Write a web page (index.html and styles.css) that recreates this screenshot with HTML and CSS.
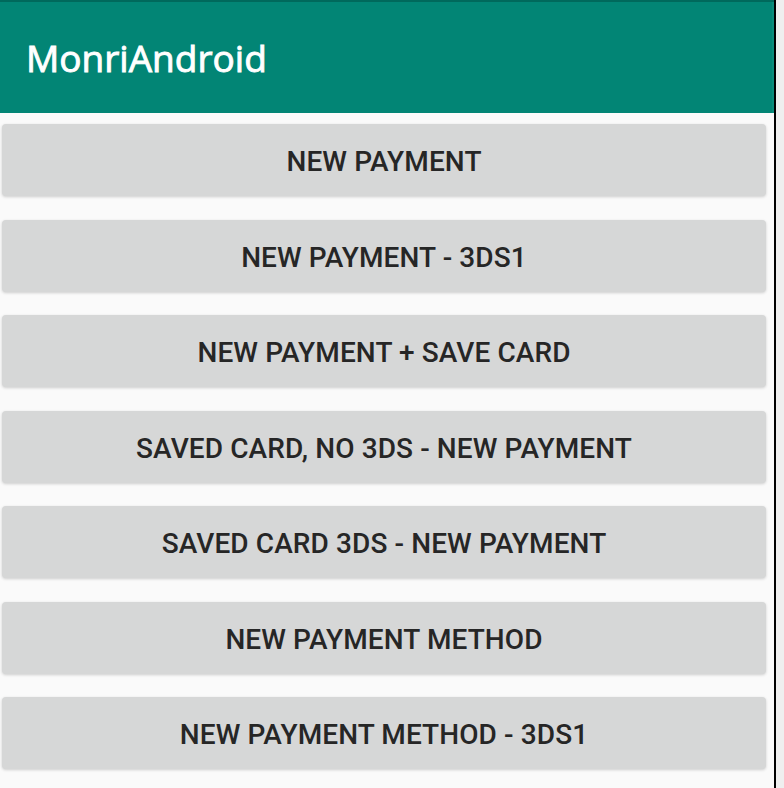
FILE: index.html
```html
<!DOCTYPE html>
<html>
<head>
<meta charset="utf-8">
<link rel="stylesheet" href="styles.css">
</head>
<body>
<div class="frame">
  <div class="screen">
    <div class="statusbar"></div>
    <header class="toolbar"><span class="title">MonriAndroid</span></header>
    <main class="list">
      <button class="btn">NEW PAYMENT</button>
      <button class="btn">NEW PAYMENT - 3DS1</button>
      <button class="btn">NEW PAYMENT + SAVE CARD</button>
      <button class="btn">SAVED CARD, NO 3DS - NEW PAYMENT</button>
      <button class="btn">SAVED CARD 3DS - NEW PAYMENT</button>
      <button class="btn">NEW PAYMENT METHOD</button>
      <button class="btn">NEW PAYMENT METHOD - 3DS1</button>
    </main>
  </div>
  <div class="divider"></div>
  <div class="side"></div>
</div>
</body>
</html>
```

FILE: styles.css
```css
html, body {
  margin: 0;
  padding: 0;
  height: 100%;
  overflow: hidden;
}
.frame {
  display: flex;
  height: 788px;
  width: 784px;
}
.screen {
  width: 774px;
  background: #fafafa;
  display: flex;
  flex-direction: column;
}
.statusbar {
  height: 2px;
  background: #00695c;
}
.toolbar {
  height: 111px;
  background: #028575;
  display: flex;
  align-items: center;
  padding-left: 26px;
  box-shadow: inset -2px 0 0 #0a8c7c;
}
.title {
  font-family: "Open Sans", sans-serif;
  font-weight: 400;
  font-size: 37px;
  color: #ffffff;
  -webkit-text-stroke: 0.9px #ffffff;
  margin-top: -1px;
}
.list {
  display: flex;
  flex-direction: column;
  gap: 23.5px;
  padding: 11px 8px 0 2px;
}
.btn {
  height: 72px;
  border: none;
  border-radius: 4px;
  background: #d6d7d7;
  box-shadow: 0 1px 3px rgba(0,0,0,0.18);
  font-family: Roboto, sans-serif;
  font-weight: 500;
  font-size: 28px;
  color: #262626;
  letter-spacing: 0.1px;
  padding: 3px 0 0;
}
.divider {
  width: 2px;
  background: #000;
}
.side {
  flex: 1;
  background: #efefef;
}
```
